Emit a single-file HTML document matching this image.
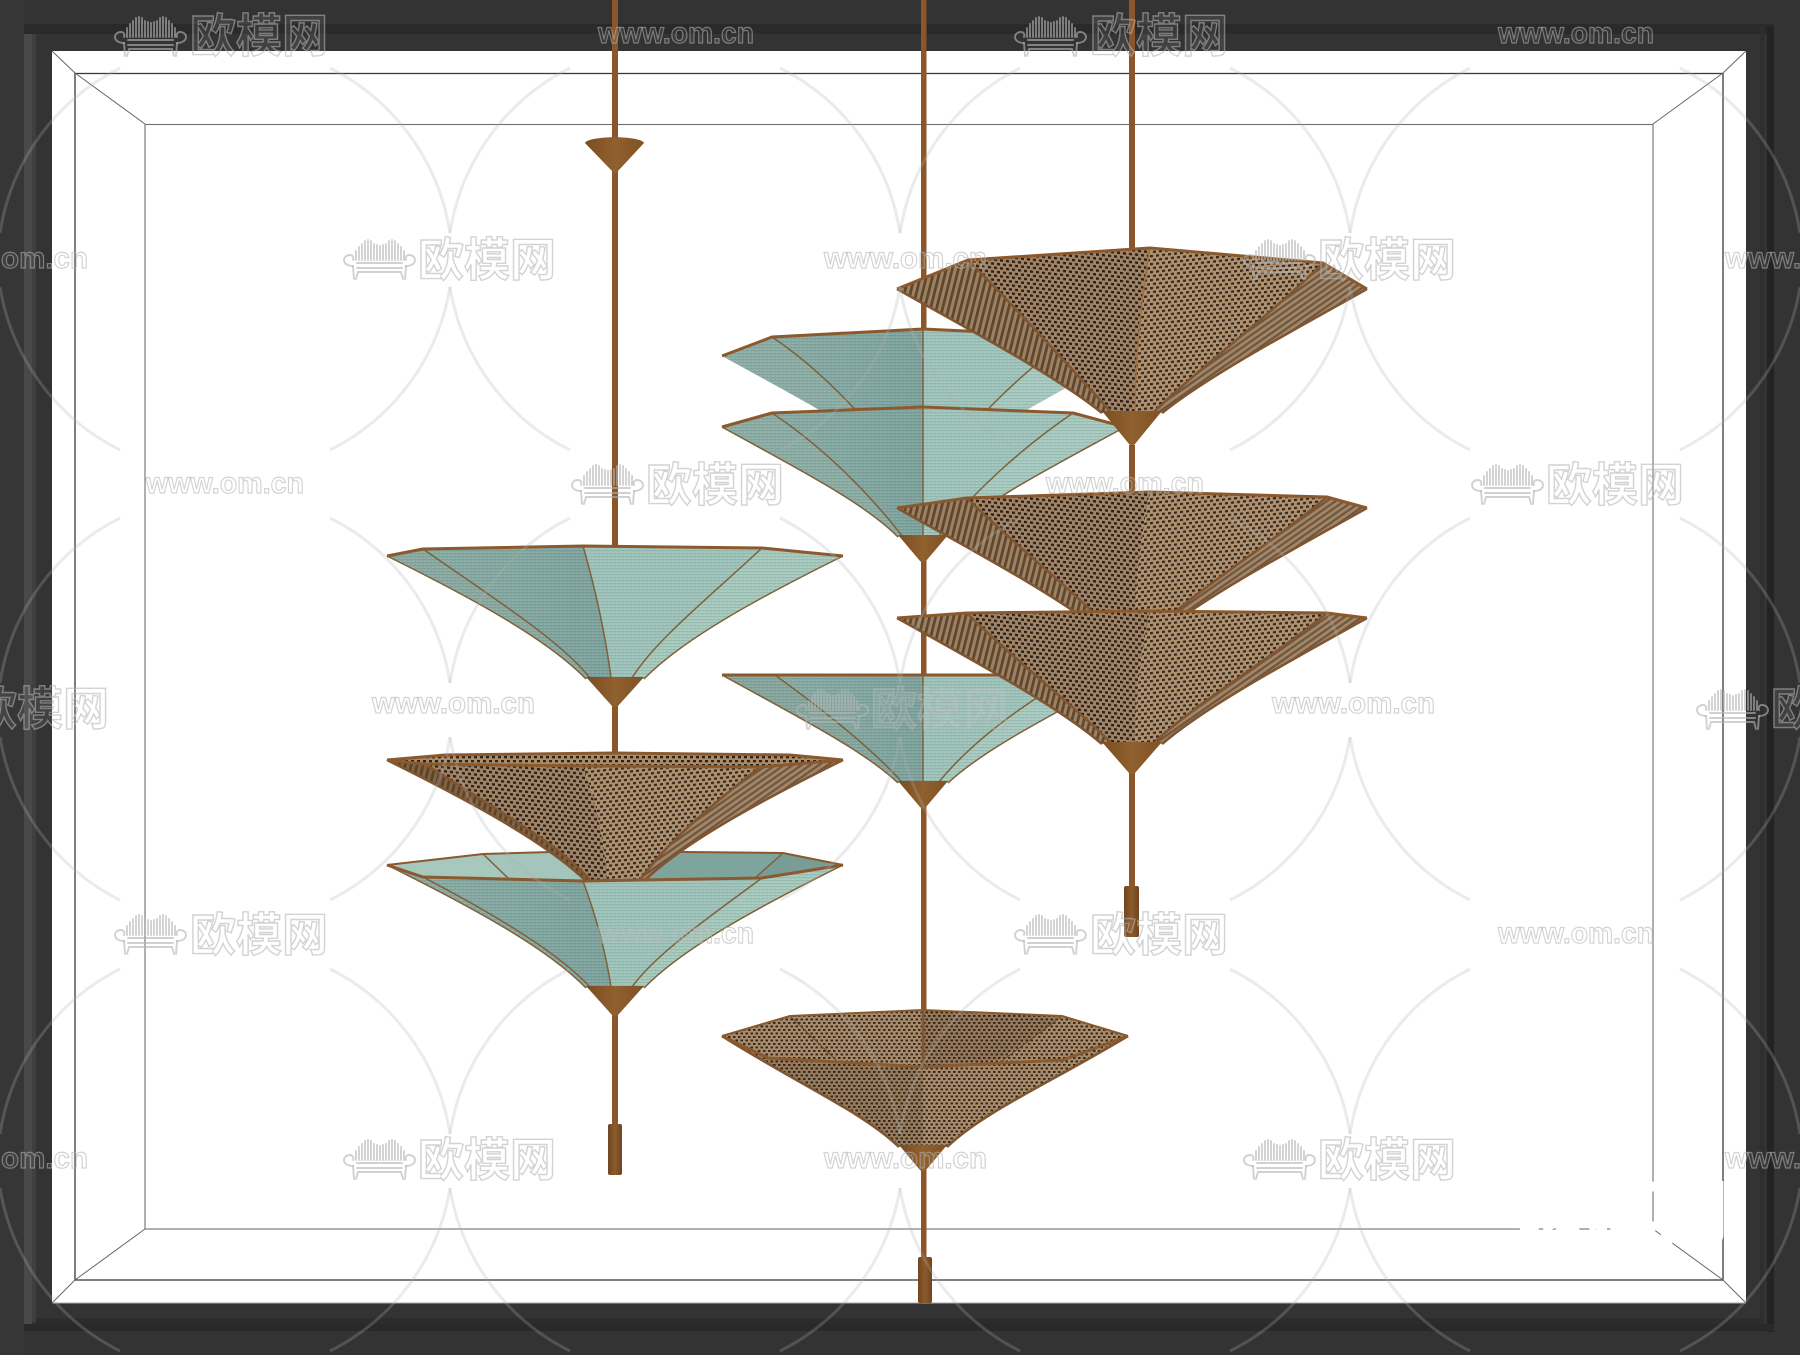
<!DOCTYPE html>
<html lang="zh">
<head>
<meta charset="utf-8">
<title>欧模网</title>
<style>
html,body{margin:0;padding:0;background:#333;width:1800px;height:1355px;overflow:hidden}
svg{display:block}
.cn{font-family:"Liberation Sans","Noto Sans CJK SC",sans-serif;font-weight:700;font-size:46px;fill:#fff;fill-opacity:.07;stroke:#b4b4b4;stroke-opacity:.58;stroke-width:1.4}
.en{font-family:"Liberation Sans",sans-serif;font-weight:700;font-size:30px;fill:#fff;fill-opacity:.05;stroke:#b4b4b4;stroke-opacity:.58;stroke-width:1.2}
.rim{fill:none;stroke:#8a5a2e;stroke-width:3;stroke-linejoin:round}
.rib{fill:none;stroke:#80603a;stroke-width:1.5}
.bribs{fill:none;stroke:#7f5430;stroke-width:2.6}
.stem{fill:#8a572a}
</style>
</head>
<body>
<svg xmlns="http://www.w3.org/2000/svg" width="1800" height="1355" viewBox="0 0 1800 1355">
<defs>
  <filter id="soft" x="-5%" y="-5%" width="110%" height="110%"><feGaussianBlur stdDeviation="0.35"/></filter>
  <pattern id="tex" width="4" height="3" patternUnits="userSpaceOnUse">
    <rect width="4" height="1" fill="#3c5048" fill-opacity=".12"/>
    <rect x="1" y="2" width="2" height="1" fill="#fff" fill-opacity=".10"/>
  </pattern>
  <pattern id="dots" width="6" height="8" patternUnits="userSpaceOnUse">
    <rect width="6" height="8" fill="#a88c6b"/>
    <rect x="0" y="0" width="3" height="2.300" fill="#2f2116"/>
    <rect x="3" y="4" width="3" height="2.300" fill="#2f2116"/>
  </pattern>
  <pattern id="dotsD" width="6" height="8" patternUnits="userSpaceOnUse" patternTransform="skewY(6)">
    <rect width="6" height="8" fill="#a08467"/>
    <rect x="0" y="0" width="3" height="2.400" fill="#2a1d12"/>
    <rect x="3" y="4" width="3" height="2.400" fill="#2a1d12"/>
  </pattern>
  <pattern id="dotsL" width="6" height="8" patternUnits="userSpaceOnUse" patternTransform="skewY(-6)">
    <rect width="6" height="8" fill="#ad9170"/>
    <rect x="0" y="0" width="3" height="2.300" fill="#35261a"/>
    <rect x="3" y="4" width="3" height="2.300" fill="#35261a"/>
  </pattern>
  <pattern id="fine" width="5" height="7" patternUnits="userSpaceOnUse">
    <rect width="5" height="7" fill="#a78b6a"/>
    <rect x="0" y="0" width="2.500" height="1.900" fill="#33251a"/>
    <rect x="2.500" y="3.500" width="2.500" height="1.900" fill="#33251a"/>
  </pattern>
  <pattern id="strL" width="6" height="6" patternUnits="userSpaceOnUse" patternTransform="skewX(-14)">
    <rect width="6" height="6" fill="#9c8265"/>
    <rect x="0" width="2.800" height="6" fill="#5f452c"/>
  </pattern>
  <pattern id="strR" width="5" height="5" patternUnits="userSpaceOnUse" patternTransform="rotate(-35)">
    <rect width="5" height="5" fill="#a0866a"/>
    <rect y="0" width="5" height="2.200" fill="#70553a"/>
  </pattern>
  <linearGradient id="cone" x1="0" x2="1" y1="0" y2="0">
    <stop offset="0" stop-color="#7a4d24"/><stop offset=".5" stop-color="#90602e"/><stop offset="1" stop-color="#7f5227"/>
  </linearGradient>
  <linearGradient id="hand" x1="0" x2="1" y1="0" y2="0">
    <stop offset="0" stop-color="#6f4520"/><stop offset=".5" stop-color="#8d5a2c"/><stop offset="1" stop-color="#6f4520"/>
  </linearGradient>
  <linearGradient id="tm" x1="0" x2="1" y1="0" y2="0">
    <stop offset="0" stop-color="#89ada5"/><stop offset="1" stop-color="#7ea29e"/>
  </linearGradient>
  <g id="arcs" fill="none" stroke="#b3b3b3" stroke-opacity=".26" stroke-width="3">
    <path d="M-105,-190 A222,222 0 0 0 -225,-25"/>
    <path d="M105,-190 A222,222 0 0 1 225,-25"/>
    <path d="M-225,29 A222,222 0 0 0 -105,192"/>
    <path d="M225,29 A222,222 0 0 1 105,192"/>
  </g>
  <g id="sofa" fill="none" stroke="#b4b4b4" stroke-opacity=".62" stroke-width="1.9" stroke-linecap="round">
    <path d="M12,21V12M15,21V8M18,21V5M21,21V2M24,21V1M27,21V2M30,21V5M33,21V6M36,21V7M39,21V6M42,21V5M45,21V2M48,21V1M51,21V2M54,21V5M57,21V8M60,21V12"/>
    <path d="M9,27C3,27 0,24 0,21C0,18 3,16 6,16C9,16 10,19 9,21"/>
    <path d="M62,27C68,27 71,24 71,21C71,18 68,16 65,16C62,16 61,19 62,21"/>
    <path d="M9,27L10,40M12,40L14,33H57L59,40M62,27L61,40"/>
    <path d="M13,24H58M13,29H58"/>
  </g>
</defs>

<!-- frame -->
<rect width="1800" height="1355" fill="#333"/>
<rect x="0" y="0" width="24" height="1355" fill="#363636"/>
<rect x="24" y="24" width="8" height="1300" fill="#494949"/>
<rect x="32" y="32" width="4" height="1290" fill="#3f3f3f"/>
<rect x="24" y="24" width="1750" height="10" fill="#2a2a2a"/>
<rect x="1760" y="26" width="4" height="1304" fill="#2e2e2e"/>
<rect x="1767" y="26" width="7" height="1306" fill="#232323"/>
<rect x="36" y="1318" width="1728" height="6" fill="#2c2c2c"/>
<rect x="24" y="1324" width="1750" height="7" fill="#292929"/>
<rect x="52" y="51" width="1694" height="1252" fill="#fff"/>
<rect x="52.5" y="1302.5" width="1693" height="1" fill="#aaa"/>
<g fill="none">
  <rect x="75" y="73.500" width="1648" height="1206.500" stroke="#3a3a3a" stroke-width="1.300"/>
  <rect x="145" y="124.500" width="1508" height="1104.500" stroke="#707070" stroke-width="1.100"/>
  <path d="M52,51L75,73L145,124M1746,51L1723,73L1653,124M52,1303L75,1280L145,1229M1746,1303L1723,1280L1653,1229" stroke="#666" stroke-width="1"/>
</g>

<g filter="url(#soft)">
<!-- LEFT LAMP -->
<g>
  <rect x="612" y="0" width="6" height="548" class="stem"/>
  <path d="M585,143Q587,138 615,137Q642,138 644,143L618,171Q615,175 612,171Z" fill="url(#cone)"/>
  <rect x="612" y="706" width="6" height="50" class="stem"/>
  <rect x="612" y="1012" width="6" height="114" class="stem"/>
  <rect x="608" y="1124" width="14" height="51" rx="2" fill="url(#hand)"/>

  <!-- teal 1 -->
  <g transform="translate(615,556)">
    <path d="M-228,0L-192,-7C-110,50 -55,85 -25,122L-29,123C-66,85 -135,46 -228,0Z" fill="#8aaaa1"/>
    <path d="M-192,-7L-32,-10Q-12,60 -4,122L-25,122C-55,85 -110,50 -192,-7Z" fill="url(#tm)"/>
    <path d="M-32,-10L147,-8C90,45 40,85 17,122L-4,122Q-12,60 -32,-10Z" fill="#9ec3ba"/>
    <path d="M147,-8L228,0C135,46 66,85 29,123L17,122C40,85 90,45 147,-8Z" fill="#a6c9bd"/>
    <path d="M-228,0L-192,-7L-32,-10L147,-8L228,0C135,46 66,85 29,123L-29,123C-66,85 -135,46 -228,0Z" fill="url(#tex)"/>
    <path class="rib" d="M-192,-7C-110,50 -55,85 -25,122M-32,-10Q-12,60 -4,122M147,-8C90,45 40,85 17,122M-228,0C-135,46 -66,85 -29,123M228,0C135,46 66,85 29,123"/>
    <path class="rim" d="M-228,0L-192,-7L-32,-10L147,-8L228,0"/>
    <path d="M-29,121H29L3,150Q0,153 -3,150Z" fill="url(#cone)"/>
  </g>

  <!-- teal 2 back -->
  <g transform="translate(615,865)">
    <path d="M-228,0L-132,-11L-105,15L-192,12Z" fill="#a6c8bd"/>
    <path d="M-132,-11L-30,-14L-32,16L-105,15Z" fill="#a3c5bb"/>
    <path d="M-30,-14L168,-12L140,13L-32,16Z" fill="#7fa39d"/>
    <path d="M168,-12L228,0L147,13L140,13Z" fill="#7a9c97"/>
    <path class="rib" d="M-132,-11L-105,15M168,-12L140,13"/>
    <path class="rim" style="stroke-width:2" d="M-228,0L-132,-11L-30,-14L168,-12L228,0"/>
  </g>

  <!-- brown -->
  <g transform="translate(615,760)">
    <path d="M-228,0L-170,-5L0,-7L175,-5L228,0L145,7L-32,6L-190,4Z" fill="url(#dots)"/>
    <path d="M-228,0L-190,4C-110,55 -55,85 -25,120L-29,121C-66,85 -135,46 -228,0Z" fill="url(#strL)"/>
    <path d="M-228,0L-190,4C-110,55 -55,85 -25,120L-29,121C-66,85 -135,46 -228,0Z" fill="#5c3f22" fill-opacity=".45"/>
    <path d="M-190,4L-32,6Q-12,60 -8,120L-25,120C-55,85 -110,55 -190,4Z" fill="url(#dotsD)"/>
    <path d="M-32,6L145,7C90,50 50,85 25,120L-8,120Q-12,60 -32,6Z" fill="url(#dotsL)"/>
    <path d="M145,7L228,0C135,46 66,85 29,121L25,120C50,85 90,50 145,7Z" fill="url(#strR)"/>
    <path class="bribs" d="M-190,4C-110,55 -55,85 -25,120M-228,0C-135,46 -66,85 -29,121M228,0C135,46 66,85 29,121M145,7C90,50 50,85 25,120"/>
    <path class="rim" d="M-228,0L-190,4L-32,6L145,7L228,0M-228,0L-170,-5L0,-7L175,-5L228,0"/>
  </g>

  <!-- teal 2 front -->
  <g transform="translate(615,865)">
    <path d="M-228,0L-192,12C-110,55 -55,90 -25,122L-29,123C-66,85 -135,46 -228,0Z" fill="#8aaaa1"/>
    <path d="M-192,12L-32,16Q-12,70 -4,122L-25,122C-55,90 -110,55 -192,12Z" fill="url(#tm)"/>
    <path d="M-32,16L147,13C90,55 40,90 17,122L-4,122Q-12,70 -32,16Z" fill="#9ec3ba"/>
    <path d="M147,13L228,0C135,46 66,85 29,123L17,122C40,90 90,55 147,13Z" fill="#a6c9bd"/>
    <path d="M-228,0L-192,12L-32,16L147,13L228,0C135,46 66,85 29,123L-29,123C-66,85 -135,46 -228,0Z" fill="url(#tex)"/>
    <path class="rib" d="M-192,12C-110,55 -55,90 -25,122M-32,16Q-12,70 -4,122M147,13C90,55 40,90 17,122M-228,0C-135,46 -66,85 -29,123M228,0C135,46 66,85 29,123"/>
    <path class="rim" d="M-228,0L-192,12L-32,16L147,13L228,0"/>
    <path d="M-29,121H29L3,150Q0,153 -3,150Z" fill="url(#cone)"/>
  </g>
</g>

<!-- CENTER LAMP -->
<g>
  <rect x="921" y="0" width="5.500" height="332" class="stem"/>
  <rect x="921" y="560" width="5.500" height="116" class="stem"/>
  <rect x="921" y="806" width="5.500" height="206" class="stem"/>
  <rect x="921" y="1170" width="5.500" height="90" class="stem"/>
  <rect x="918" y="1257" width="14" height="46" rx="2" fill="url(#hand)"/>

  <!-- teal top -->
  <g transform="translate(923,356)">
    <path d="M-201,0L-151,-19C-100,15 -55,65 -20,110L-25,110C-60,75 -125,42 -201,0Z" fill="#8cada5"/>
    <path d="M-151,-19L0,-27V110H-20C-55,65 -100,15 -151,-19Z" fill="url(#tm)"/>
    <path d="M0,-27L150,-20C100,15 50,65 15,110H0Z" fill="#9fc4bc"/>
    <path d="M150,-20L202,0C125,42 60,75 25,110H15C50,65 100,15 150,-20Z" fill="#a6cabf"/>
    <path d="M-201,0L-151,-19L0,-27L150,-20L202,0C125,42 60,75 25,110H-25C-60,75 -125,42 -201,0Z" fill="url(#tex)"/>
    <path class="rib" d="M-151,-19C-100,15 -55,65 -20,110M0,-27V110M150,-20C100,15 50,65 15,110"/>
    <path class="rim" d="M-201,0L-151,-19L0,-27L150,-20"/>
  </g>
  <!-- teal 2 -->
  <g transform="translate(923,427)">
    <path d="M-201,0L-151,-14C-100,20 -55,65 -20,110L-25,110C-60,75 -125,42 -201,0Z" fill="#8cada5"/>
    <path d="M-151,-14L0,-20V110H-20C-55,65 -100,20 -151,-14Z" fill="url(#tm)"/>
    <path d="M0,-20L150,-14C100,20 50,65 15,110H0Z" fill="#9fc4bc"/>
    <path d="M150,-14L202,0C125,42 60,75 25,110H15C50,65 100,20 150,-14Z" fill="#a6cabf"/>
    <path d="M-201,0L-151,-14L0,-20L150,-14L202,0C125,42 60,75 25,110H-25C-60,75 -125,42 -201,0Z" fill="url(#tex)"/>
    <path class="rib" d="M-151,-14C-100,20 -55,65 -20,110M0,-20V110M150,-14C100,20 50,65 15,110M-201,0C-125,42 -60,75 -25,110M202,0C125,42 60,75 25,110"/>
    <path class="rim" d="M-201,0L-151,-14L0,-20L150,-14L202,0"/>
    <path d="M-25,108H25L3,134Q0,137 -3,134Z" fill="url(#cone)"/>
  </g>
  <!-- teal 3 -->
  <g transform="translate(923,675)">
    <path d="M-201,0H-148C-100,35 -55,70 -20,108L-25,108C-60,75 -125,42 -201,0Z" fill="#86a69e"/>
    <path d="M-148,0H0V108H-20C-55,70 -100,35 -148,0Z" fill="url(#tm)"/>
    <path d="M0,0H150C100,30 50,65 15,108H0Z" fill="#9ec3bb"/>
    <path d="M150,0H202C125,42 60,75 25,108H15C50,65 100,30 150,0Z" fill="#a6cabf"/>
    <path d="M-201,0H202C125,42 60,75 25,108H-25C-60,75 -125,42 -201,0Z" fill="url(#tex)"/>
    <path class="rib" d="M-148,0C-100,35 -55,70 -20,108M0,0V108M150,0C100,30 50,65 15,108M-201,0C-125,42 -60,75 -25,108M202,0C125,42 60,75 25,108"/>
    <path class="rim" d="M-201,0H202"/>
    <path d="M-25,106H25L3,132Q0,135 -3,132Z" fill="url(#cone)"/>
  </g>
  <!-- brown bottom -->
  <g transform="translate(923,1036)">
    <path d="M-201,0L-133,-20L0,-26L139,-20L205,0L140,24L0,31L-155,22Z" fill="url(#fine)"/>
    <path d="M-201,0L-155,22L0,31L140,24L205,0C125,48 60,76 24,111H-24C-60,76 -125,48 -201,0Z" fill="url(#fine)"/>
    <path d="M-201,0L-155,22L0,31V111H-24C-60,76 -125,48 -201,0Z" fill="#2f2114" fill-opacity=".14"/>
    <path d="M0,-26L139,-20L76,24L0,31Z" fill="#2f2114" fill-opacity=".16"/>
    <path class="rib" style="stroke:#6b4a2b;stroke-width:1" d="M-133,-20L-85,26M139,-20L76,27"/>
    <path class="bribs" d="M-201,0C-125,48 -60,76 -24,111M205,0C125,48 60,76 24,111M0,-26V31"/>
    <path class="rim" style="stroke-width:2" d="M-201,0L-133,-20L0,-26L139,-20L205,0"/>
    <path class="rim" d="M-201,0L-155,22L0,31L140,24L205,0"/>
    <path d="M-24,109H24L3,134Q0,137 -3,134Z" fill="url(#cone)"/>
  </g>
</g>

<!-- RIGHT LAMP -->
<g>
  <rect x="1129" y="0" width="6" height="250" class="stem"/>
  <rect x="1129" y="445" width="6" height="50" class="stem"/>
  <rect x="1129" y="772" width="6" height="116" class="stem"/>
  <rect x="1124" y="886" width="15" height="51" rx="2" fill="url(#hand)"/>

  <!-- R1 -->
  <g transform="translate(1132,289)">
    <path d="M-235,0L-164,-29C-120,15 -55,85 -22,122L-30,124C-72,90 -145,50 -235,0Z" fill="url(#strL)"/>
    <path d="M-164,-29L18,-41Q4,40 3,122L-22,122C-55,85 -120,15 -164,-29Z" fill="url(#dotsD)"/>
    <path d="M18,-41L191,-26C140,25 60,85 23,122L3,122Q4,40 18,-41Z" fill="url(#dotsL)"/>
    <path d="M191,-26L235,0C145,50 72,90 30,124L23,122C60,85 140,25 191,-26Z" fill="url(#strR)"/>
    <path class="bribs" d="M-164,-29C-120,15 -55,85 -22,122M191,-26C140,25 60,85 23,122M-235,0C-145,50 -72,90 -30,124M235,0C145,50 72,90 30,124"/>
    <path class="rib" style="stroke:#a2703e" d="M18,-41Q4,40 3,122"/>
    <path class="rim" d="M-235,0L-164,-29L18,-41L191,-26L235,0"/>
    <path d="M-30,122H30L3,155Q0,158 -3,155Z" fill="url(#cone)"/>
  </g>
  <!-- R2 -->
  <g transform="translate(1132,508)">
    <path d="M-235,0L-165,-10C-120,35 -55,85 -22,122L-30,124C-72,90 -145,50 -235,0Z" fill="url(#strL)"/>
    <path d="M-165,-10L18,-16Q4,50 3,122L-22,122C-55,85 -120,35 -165,-10Z" fill="url(#dotsD)"/>
    <path d="M18,-16L195,-11C140,35 60,85 23,122L3,122Q4,50 18,-16Z" fill="url(#dotsL)"/>
    <path d="M195,-11L235,0C145,50 72,90 30,124L23,122C60,85 140,35 195,-11Z" fill="url(#strR)"/>
    <path class="bribs" d="M-165,-10C-120,35 -55,85 -22,122M195,-11C140,35 60,85 23,122M-235,0C-145,50 -72,90 -30,124M235,0C145,50 72,90 30,124"/>
    <path class="rim" d="M-235,0L-165,-10L18,-16L195,-11L235,0"/>
  </g>
  <!-- R3 -->
  <g transform="translate(1132,618)">
    <path d="M-235,0L-165,-5C-120,40 -55,90 -22,124L-30,126C-72,90 -145,50 -235,0Z" fill="url(#strL)"/>
    <path d="M-165,-5L18,-7Q4,55 3,124L-22,124C-55,90 -120,40 -165,-5Z" fill="url(#dotsD)"/>
    <path d="M18,-7L195,-5C140,40 60,88 23,124L3,124Q4,55 18,-7Z" fill="url(#dotsL)"/>
    <path d="M195,-5L235,0C145,50 72,90 30,126L23,124C60,88 140,40 195,-5Z" fill="url(#strR)"/>
    <path class="bribs" d="M-165,-5C-120,40 -55,90 -22,124M195,-5C140,40 60,88 23,124M-235,0C-145,50 -72,90 -30,126M235,0C145,50 72,90 30,126"/>
    <path class="rim" d="M-235,0L-165,-5L18,-7L195,-5L235,0"/>
    <path d="M-30,124H30L3,155Q0,158 -3,155Z" fill="url(#cone)"/>
  </g>
</g>
</g>

<!-- white stamp -->
<text x="1517" y="1238" font-family="'Liberation Sans','Noto Sans CJK SC',sans-serif" font-weight="700" font-size="70" fill="#fff" stroke="#fff" stroke-width="3">欧模网</text>

<!-- watermark arcs -->
<g>
  <use href="#arcs" x="225" y="258"/><use href="#arcs" x="675" y="258"/><use href="#arcs" x="1125" y="258"/><use href="#arcs" x="1575" y="258"/>
  <use href="#arcs" x="225" y="708"/><use href="#arcs" x="675" y="708"/><use href="#arcs" x="1125" y="708"/><use href="#arcs" x="1575" y="708"/>
  <use href="#arcs" x="225" y="1159"/><use href="#arcs" x="675" y="1159"/><use href="#arcs" x="1125" y="1159"/><use href="#arcs" x="1575" y="1159"/>
</g>

<!-- watermark sofas -->
<g>
  <use href="#sofa" x="115" y="16"/><use href="#sofa" x="1015" y="16"/>
  <use href="#sofa" x="344" y="239"/><use href="#sofa" x="1244" y="239"/>
  <use href="#sofa" x="572" y="464"/><use href="#sofa" x="1472" y="464"/>
  <use href="#sofa" x="797" y="689"/><use href="#sofa" x="-103" y="689"/><use href="#sofa" x="1697" y="689"/>
  <use href="#sofa" x="115" y="914"/><use href="#sofa" x="1015" y="914"/>
  <use href="#sofa" x="344" y="1139"/><use href="#sofa" x="1244" y="1139"/>
</g>

<!-- watermark logo text -->
<g>
  <text class="cn" x="190" y="52">欧模网</text><text class="cn" x="1090" y="52">欧模网</text>
  <text class="cn" x="418" y="276">欧模网</text><text class="cn" x="1318" y="276">欧模网</text>
  <text class="cn" x="646" y="501">欧模网</text><text class="cn" x="1546" y="501">欧模网</text>
  <text class="cn" x="871" y="725">欧模网</text><text class="cn" x="-29" y="725">欧模网</text><text class="cn" x="1771" y="725">欧模网</text>
  <text class="cn" x="190" y="951">欧模网</text><text class="cn" x="1090" y="951">欧模网</text>
  <text class="cn" x="418" y="1176">欧模网</text><text class="cn" x="1318" y="1176">欧模网</text>
</g>

<!-- watermark url text -->
<g>
  <text class="en" x="598" y="43" textLength="156" lengthAdjust="spacingAndGlyphs">www.om.cn</text>
  <text class="en" x="1498" y="43" textLength="156" lengthAdjust="spacingAndGlyphs">www.om.cn</text>
  <text class="en" x="-75" y="268" textLength="163" lengthAdjust="spacingAndGlyphs">www.om.cn</text>
  <text class="en" x="824" y="268" textLength="163" lengthAdjust="spacingAndGlyphs">www.om.cn</text>
  <text class="en" x="1725" y="268" textLength="163" lengthAdjust="spacingAndGlyphs">www.om.cn</text>
  <text class="en" x="146" y="493" textLength="158" lengthAdjust="spacingAndGlyphs">www.om.cn</text>
  <text class="en" x="1046" y="493" textLength="158" lengthAdjust="spacingAndGlyphs">www.om.cn</text>
  <text class="en" x="372" y="713" textLength="163" lengthAdjust="spacingAndGlyphs">www.om.cn</text>
  <text class="en" x="1272" y="713" textLength="163" lengthAdjust="spacingAndGlyphs">www.om.cn</text>
  <text class="en" x="598" y="943" textLength="156" lengthAdjust="spacingAndGlyphs">www.om.cn</text>
  <text class="en" x="1498" y="943" textLength="156" lengthAdjust="spacingAndGlyphs">www.om.cn</text>
  <text class="en" x="-75" y="1168" textLength="163" lengthAdjust="spacingAndGlyphs">www.om.cn</text>
  <text class="en" x="824" y="1168" textLength="163" lengthAdjust="spacingAndGlyphs">www.om.cn</text>
  <text class="en" x="1725" y="1168" textLength="163" lengthAdjust="spacingAndGlyphs">www.om.cn</text>
</g>
</svg>
</body>
</html>
